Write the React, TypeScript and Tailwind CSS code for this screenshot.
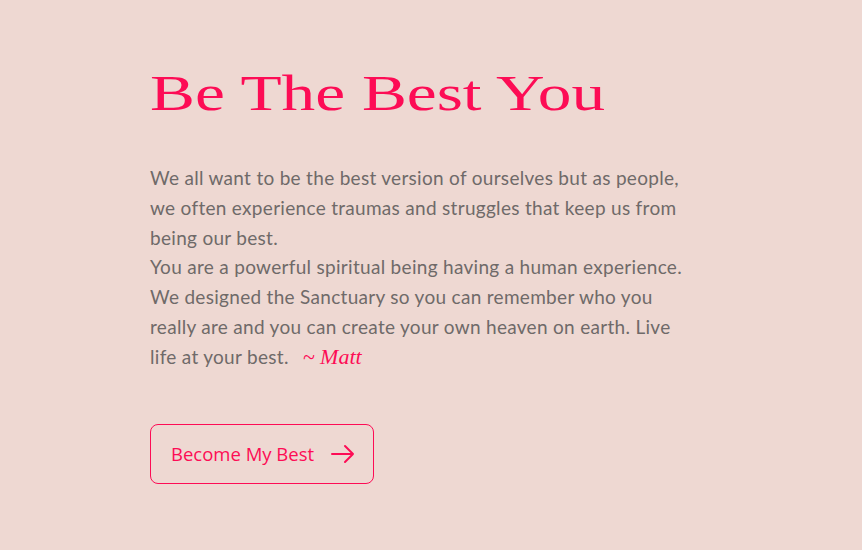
import React from "react";

const App = () => {
  return (
    <div className="w-[862px] h-[550px] bg-[#eed8d2] overflow-hidden">
      <section className="pl-[150px] pt-[64px]">
        <h1 className="origin-left scale-x-[1.32] text-[51px] leading-[58px] text-[#fd0c55] [font-family:'Liberation_Serif',serif]">
          Be The Best You
        </h1>
        <p className="mt-[41px] text-[19px] leading-[29.8px] tracking-[0.3px] text-[#6f6a69] [font-family:Lato,sans-serif] whitespace-nowrap">
          We all want to be the best version of ourselves but as people,
          <br />
          we often experience traumas and struggles that keep us from
          <br />
          being our best.
          <br />
          You are a powerful spiritual being having a human experience.
          <br />
          We designed the Sanctuary so you can remember who you
          <br />
          really are and you can create your own heaven on earth. Live
          <br />
          life at your best.
          <span className="ml-[14px] italic tracking-normal text-[#fd0c55] text-[22px] [font-family:'Liberation_Serif',serif]">
            ~ Matt
          </span>
        </p>
        <button className="mt-[52px] w-[224px] h-[60px] flex items-center justify-between pl-[20px] pr-[18px] border border-[#fd0c55] rounded-[8px] text-[#fd0c55] text-[18.5px] [font-family:'Open_Sans',sans-serif]">
          <span>Become My Best</span>
          <svg width="24" height="20" viewBox="0 0 24 20" fill="none" stroke="currentColor" strokeWidth="2" strokeLinecap="round" strokeLinejoin="round">
            <path d="M1 10h21M14 2l8 8-8 8" />
          </svg>
        </button>
      </section>
    </div>
  );
};

export default App;
